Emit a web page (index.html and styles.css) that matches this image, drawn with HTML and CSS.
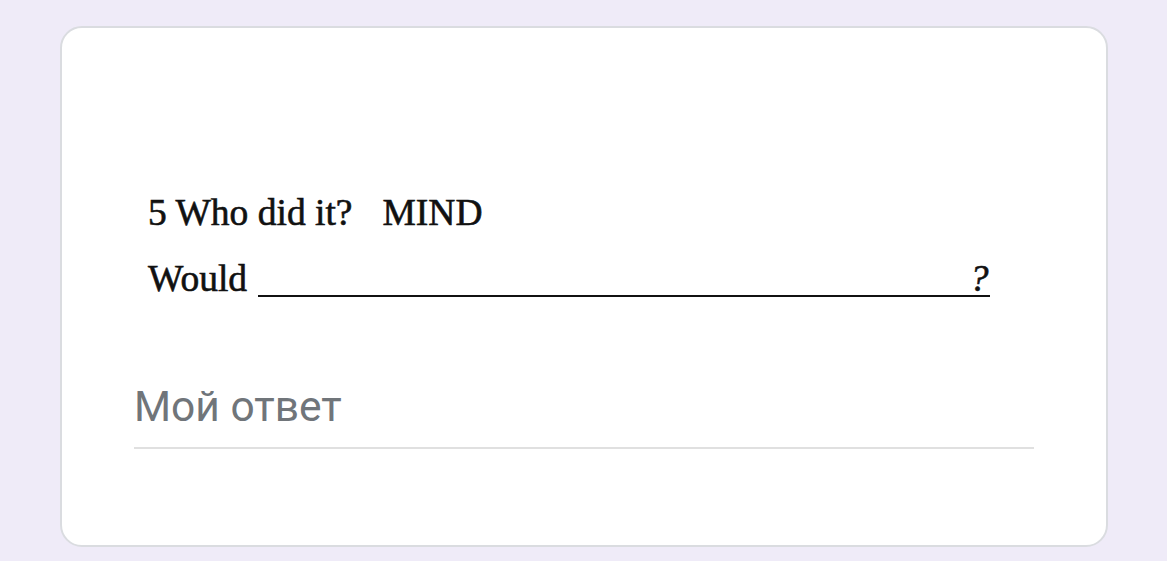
FILE: index.html
```html
<!DOCTYPE html>
<html lang="ru">
<head>
    <meta charset="UTF-8">
    <meta name="viewport" content="width=device-width, initial-scale=1.0">
    <title>Вопрос 5</title>
    <link rel="stylesheet" href="styles.css">
</head>
<body>
    <div class="page">
        <div class="card">
            <div class="question">
                <div class="q-line">5 Who did it?<span class="cue">MIND</span></div>
                <div class="q-line">Would <span class="blank"><i>?</i></span></div>
            </div>

            <div class="answer">
                <input type="text" class="answer-input" placeholder="Мой ответ">
            </div>
        </div>
    </div>
</body>
</html>
```

FILE: styles.css
```css
:root {
    --page-background: #efebf8;
    --card-background: #fff;
    --card-border: #dadce0;
    --text-dark: #111;
    --text-muted: #70757a;
}

body {
    margin: 0;
    font-family: Roboto, Arial, sans-serif;
    background-color: var(--page-background);
}

.page {
    padding: 26px 59px 0 60px;
}

.card {
    background-color: var(--card-background);
    border: 2px solid var(--card-border);
    border-radius: 22px;
    padding: 152px 72px 0;
    box-sizing: border-box;
    height: 521px;
}

.question {
    padding-left: 14px;
    font-family: "Liberation Serif", "Times New Roman", serif;
    font-size: 37.5px;
    line-height: 66px;
    color: var(--text-dark);
    -webkit-text-stroke: 0.6px var(--text-dark);
}

.cue {
    margin-left: 30px;
}

.blank {
    display: inline-block;
    width: 732px;
    line-height: 32px;
    border-bottom: 2px solid var(--text-dark);
    text-align: right;
    padding-right: 2px;
    box-sizing: border-box;
    margin-left: 2px;
}

.answer {
    margin-top: 70px;
    width: 900px;
}

.answer-input {
    width: 100%;
    box-sizing: border-box;
    border: none;
    border-bottom: 2px solid #e0e0e0;
    padding: 0 0 16px;
    font-family: Roboto, Arial, sans-serif;
    font-size: 42.5px;
    color: #202124;
    outline: none;
    background: transparent;
}

.answer-input::placeholder {
    color: var(--text-muted);
}
```
